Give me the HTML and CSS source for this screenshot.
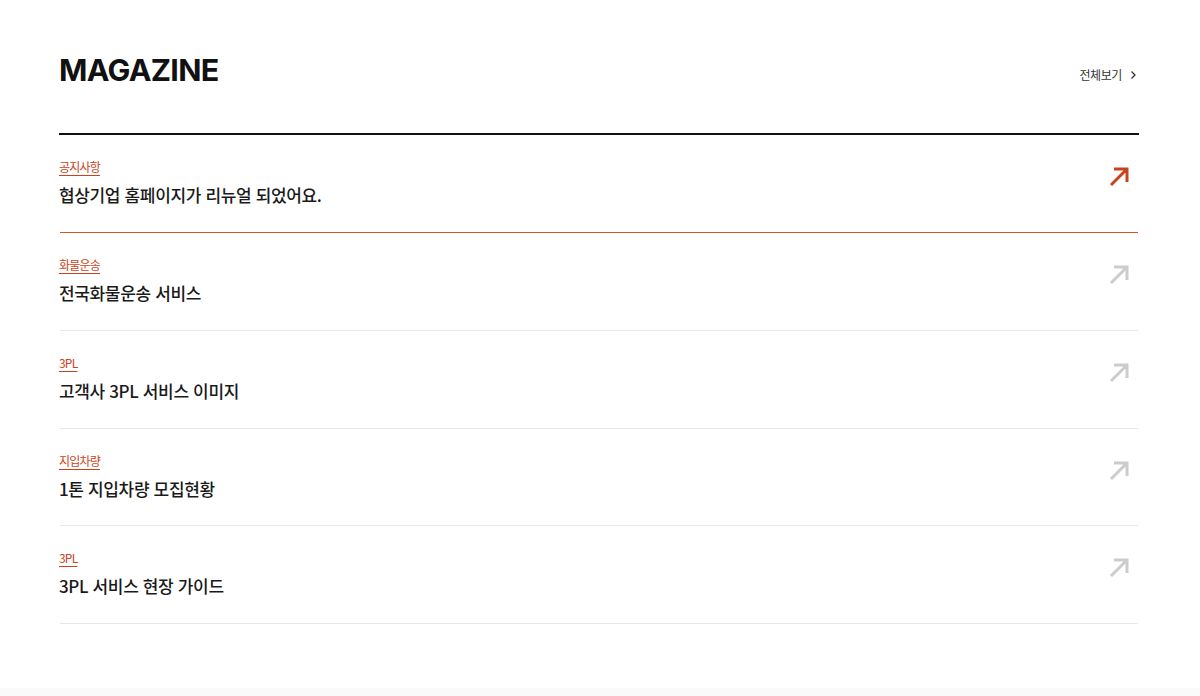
FILE: index.html
```html
<!DOCTYPE html>
<html lang="ko">
<head>
<meta charset="utf-8">
<title>Magazine</title>
<link rel="stylesheet" href="styles.css">
</head>
<body>
<section class="magazine">
  <header class="mag-head">
    <h2 class="mag-title">MAGAZINE</h2>
    <a class="more" href="#">전체보기
      <svg class="chev" width="8" height="10" viewBox="0 0 8 10"><path d="M2.5 1.5 L6 5 L2.5 8.5" fill="none" stroke="#333" stroke-width="1.3"/></svg>
    </a>
  </header>
  <ul class="list">
    <li class="item active">
      <div class="text">
        <span class="cat">공지사항</span>
        <p class="subject">협상기업 홈페이지가 리뉴얼 되었어요.</p>
      </div>
      <svg class="arrow" width="22" height="22" viewBox="0 0 22 22"><path d="M3 19 L19 3 M6 3 H19 V16" fill="none" stroke-width="3"/></svg>
    </li>
    <li class="item">
      <div class="text">
        <span class="cat">화물운송</span>
        <p class="subject">전국화물운송 서비스</p>
      </div>
      <svg class="arrow" width="22" height="22" viewBox="0 0 22 22"><path d="M3 19 L19 3 M6 3 H19 V16" fill="none" stroke-width="3"/></svg>
    </li>
    <li class="item">
      <div class="text">
        <span class="cat">3PL</span>
        <p class="subject">고객사 3PL 서비스 이미지</p>
      </div>
      <svg class="arrow" width="22" height="22" viewBox="0 0 22 22"><path d="M3 19 L19 3 M6 3 H19 V16" fill="none" stroke-width="3"/></svg>
    </li>
    <li class="item">
      <div class="text">
        <span class="cat">지입차량</span>
        <p class="subject">1톤 지입차량 모집현황</p>
      </div>
      <svg class="arrow" width="22" height="22" viewBox="0 0 22 22"><path d="M3 19 L19 3 M6 3 H19 V16" fill="none" stroke-width="3"/></svg>
    </li>
    <li class="item">
      <div class="text">
        <span class="cat">3PL</span>
        <p class="subject">3PL 서비스 현장 가이드</p>
      </div>
      <svg class="arrow" width="22" height="22" viewBox="0 0 22 22"><path d="M3 19 L19 3 M6 3 H19 V16" fill="none" stroke-width="3"/></svg>
    </li>
  </ul>
</section>
<div class="bottom-strip"></div>
</body>
</html>
```
FILE: styles.css
```css
html, body {
  margin: 0;
  padding: 0;
  background: #ffffff;
}
body {
  height: 696px;
  display: flex;
  flex-direction: column;
  font-family: "Noto Sans CJK KR", "Noto Sans", sans-serif;
}
.magazine {
  flex: 1;
  padding: 52px 61px 0 59px;
}
.mag-head {
  display: flex;
  justify-content: space-between;
  align-items: center;
  height: 36px;
  margin-bottom: 45px;
}
.mag-title {
  margin: 0;
  font-family: Inter, "Liberation Sans", sans-serif;
  font-weight: 700;
  font-size: 30.5px;
  line-height: 36px;
  letter-spacing: -0.7px;
  color: #111;
}
.more {
  display: flex;
  align-items: center;
  gap: 7px;
  margin-top: 9px;
  margin-right: 2px;
  font-size: 12px;
  letter-spacing: -0.4px;
  color: #333;
  text-decoration: none;
}
.chev { display: block; }
.list {
  list-style: none;
  margin: 0;
  padding: 0;
  border-top: 2px solid #111;
}
.item {
  display: flex;
  justify-content: space-between;
  align-items: flex-start;
  margin: 0 1px;
  padding: 23px 8px 24px 0;
  border-bottom: 1px solid #e8e8e8;
}
.item:nth-child(4) {
  padding-bottom: 23px;
}
.item.active {
  border-bottom-color: #d9541f;
}
.text {
  display: flex;
  flex-direction: column;
  align-items: flex-start;
  margin-left: -1px;
}
.cat {
  font-size: 12px;
  line-height: 18px;
  letter-spacing: -0.8px;
  color: #c8431b;
  text-decoration: underline;
  text-underline-offset: 3px;
}
.subject {
  margin: 6px 0 0;
  font-size: 17px;
  line-height: 26px;
  font-weight: 500;
  letter-spacing: -0.35px;
  color: #1a1a1a;
}
.arrow {
  margin-top: 8px;
  stroke: #cccccc;
}
.item.active .arrow {
  stroke: #c8431b;
}
.bottom-strip {
  height: 8px;
  background: #fafafa;
}
```
